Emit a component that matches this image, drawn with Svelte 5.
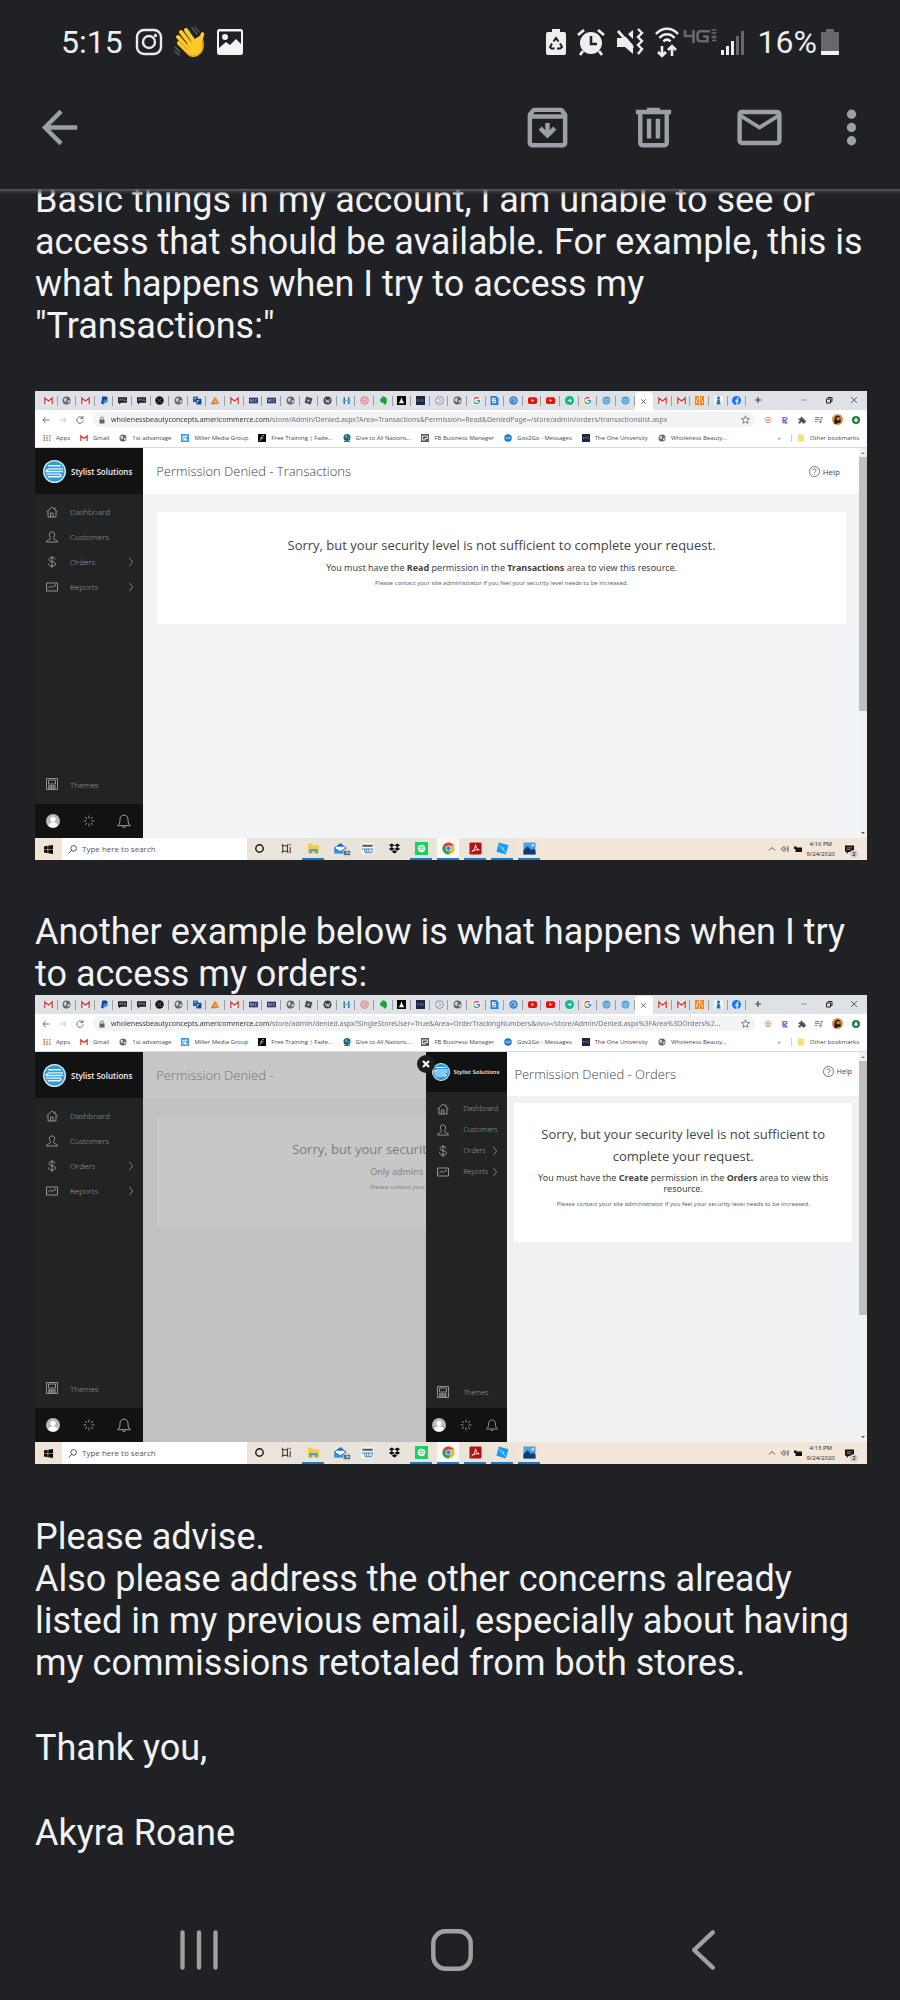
<script>
  const site = 'wholenessbeautyconcepts.americommerce.com';
  const urls = {
    transactions: site + '/store/Admin/Denied.aspx?Area=Transactions&Permission=Read&DeniedPage=/store/admin/orders/transactionslist.aspx',
    orders: site + '/store/admin/denied.aspx?SingleStoreUser=True&Area=OrderTrackingNumbers&ovu=/store/Admin/Denied.aspx%3FArea%3DOrders%2...'
  };
  const tabs = [
    'gmail', 'globe', 'gmail', 'paypal', 'prg', 'prg', 'coin', 'globe', 'people', 'ads', 'gmail', 'scc', 'scc',
    'globe', 'rhombus', 'wordpress', 'letterh', 'rings', 'elephant', 'lamp', 'title', 'ring', 'globe', 'google',
    'bluedoc', 'swirl', 'youtube', 'youtube', 'teal', 'google', 'sky', 'sky', 'active', 'gmail', 'gmail', 'carrots',
    'figure', 'facebook'
  ];
  const bookmarks = [
    ['apps', 'Apps'], ['gmail', 'Gmail'], ['globe', '1st advantage'], ['kblue', 'Miller Media Group'],
    ['script', 'Free Training | Fade...'], ['earth', 'Give to All Nations...'], ['fbm', 'FB Business Manager'],
    ['gov', 'Gov2Go - Messages'], ['title', 'The One University'], ['globe', 'Wholeness Beauty...']
  ];
  const menu = [['home', 'Dashboard', false], ['user', 'Customers', false], ['dollar', 'Orders', true], ['chart', 'Reports', true]];
  const apps = [
    ['cortana', false], ['taskview', false], ['folder', true], ['mail', false], ['shop', false], ['dropbox', false],
    ['spot', true], ['chrome', true], ['acrobat', true], ['tile', true], ['photos', true]
  ];
</script>

{#snippet fav(kind)}
  <svg class="fav" viewBox="0 0 16 16" aria-hidden="true">
    {#if kind === 'gmail'}
      <path d="M1 3h14v11H1z" fill="#f6f0f0" />
      <path d="M1.500 14V3.500L8 9l6.500-5.500V14" fill="none" stroke="#d6453d" stroke-width="2.400" />
    {:else if kind === 'globe'}
      <circle cx="8" cy="8" r="7" fill="#5f6368" />
      <path d="M3 5l4-2 2 2-2 2 1 2-2 2-3-3zM10 8l4-1-1 4-3 2z" fill="#d7dadd" />
    {:else if kind === 'paypal'}
      <path d="M4 1h6c3 0 4 2 3 5s-3 4-5 4H7l-1 4H2z" fill="#1d3f8f" />
      <path d="M7 6h7c0 4-2 6-5 6H8l-.5 3H5z" fill="#2596d8" />
    {:else if kind === 'prg'}
      <path d="M0 2h16v10H5l-3 3v-3H0z" fill="#1b1c1f" />
      <path d="M3 9V5h2v2H3m4 2V5h2v2l1 2m4-4h-2v4h2V7" fill="none" stroke="#aaa" stroke-width="1" />
    {:else if kind === 'coin'}
      <circle cx="8" cy="8" r="7.500" fill="#161512" />
      <path d="M4 4l8 8M12 4l-8 8" stroke="#7e7024" stroke-width="1.600" />
    {:else if kind === 'people'}
      <path d="M0 1h9v10H0z" fill="#1767b4" />
      <path d="M6 5h9v10H6z" fill="#0d4a8c" />
      <path d="M2 4h4M8 12V8h3" stroke="#cfe2f4" stroke-width="1.500" fill="none" />
    {:else if kind === 'ads'}
      <path d="M5 2h4l6 12H9z" fill="#f39a2c" /><path d="M7 5L2 13h8" fill="none" stroke="#e9761f" stroke-width="3" />
    {:else if kind === 'scc'}
      <path d="M0 3h16v10H0z" fill="#27306f" />
      <path d="M5 6H2v2h3v2H2m7-4H7v4h2m5-4h-3v4h3" fill="none" stroke="#c9cce6" />
    {:else if kind === 'rhombus'}
      <path d="M4 1l11 3-3 11-11-3z" fill="#4d5156" /><path d="M7 6l3 1-1 3-3-1z" fill="#d5d7da" />
    {:else if kind === 'wordpress'}
      <circle cx="8" cy="8" r="7" fill="#3c3f42" />
      <path d="M4 5l2.500 7L8 7l2 5 2-7" fill="none" stroke="#e4e6e9" stroke-width="1.500" />
    {:else if kind === 'letterh'}
      <path d="M4 2v12M12 2v12" stroke="#2c7096" stroke-width="2.500" /><path d="M1 8h14" stroke="#64b0d0" stroke-width="2" />
    {:else if kind === 'rings'}
      <g fill="none" stroke="#e46c72" stroke-width="1.500"><circle cx="8" cy="8" r="7" /><circle cx="8" cy="8" r="4" /><path d="M6 8h4" /></g>
    {:else if kind === 'elephant'}
      <path d="M5 1c5-1 9 1 9 6 0 6-1 8-4 8-2 0-3-2-1-3H7c-3 0-6-2-5-7l3-1z" fill="#16a637" />
    {:else if kind === 'lamp'}
      <path d="M0 0h16v16H0z" fill="#080808" /><path d="M8 2l2 6 3 5H3l3-5z" fill="#f4f4f4" />
    {:else if kind === 'title'}
      <path d="M0 0h16v16H0z" fill="#1b2742" /><path d="M3 6v4m0-3h2m2-1v4m3-5v5m2-3h2m-2 3h2" stroke="#8d9bb8" fill="none" />
    {:else if kind === 'ring'}
      <circle cx="8" cy="8" r="7" fill="#e9ebf2" stroke="#7a809a" stroke-width="1.500" /><path d="M5 4l6 4-6 4" fill="none" stroke="#5b6287" />
    {:else if kind === 'google'}
      <circle cx="8" cy="8" r="8" fill="#fff" />
      <g fill="none" stroke-width="2.400"><path d="M12 4a5.500 5.500 0 0 0-8.500 1.500" stroke="#ea4335" /><path d="M3.500 5.500a5.500 5.500 0 0 0 0 5" stroke="#fbbc05" /><path d="M3.500 10.500a5.500 5.500 0 0 0 8 2" stroke="#34a853" /><path d="M11.500 12.500A5 5 0 0 0 13.500 8H8" stroke="#4285f4" /></g>
    {:else if kind === 'bluedoc'}
      <path d="M1 0h10l4 4v12H1z" fill="#1b86e0" /><path d="M5 4v8h5V8H5V4h4v4" fill="none" stroke="#fff" stroke-width="1.700" />
    {:else if kind === 'swirl'}
      <circle cx="8" cy="8" r="7.500" fill="#3a83c4" /><path d="M4 10a4 4 0 1 1 6 1M8 5a3 3 0 1 1-2 5" fill="none" stroke="#c5e2f4" stroke-width="1.300" />
    {:else if kind === 'youtube'}
      <rect x="0" y="2" width="16" height="12" rx="3" fill="#e8120c" /><path d="M6.500 5.500v5l4-2.500z" fill="#fff" />
    {:else if kind === 'teal'}
      <circle cx="8" cy="8" r="8" fill="#10b98a" /><path d="M5 8h6M8 5l3 3-3 3" stroke="#d6fff2" stroke-width="1.800" fill="none" />
    {:else if kind === 'sky'}
      <circle cx="8" cy="8" r="7" fill="#4ca3d6" /><path d="M3 6h10M2 9h12M5 12h6" stroke="#a9d6ee" stroke-width="1.200" />
    {:else if kind === 'active'}
      <path d="M3 3l10 10M13 3L3 13" stroke="#45484c" stroke-width="1.800" />
    {:else if kind === 'carrots'}
      <path d="M0 0h16v16H0z" fill="#f58220" /><path d="M5 2v3L3 9v4M11 2v3l2 4v4M8 0v16" stroke="#fff3e4" stroke-width="1.600" fill="none" />
    {:else if kind === 'figure'}
      <path d="M0 0h16v16H0z" fill="#eef6fa" /><circle cx="8" cy="3.500" r="2.500" fill="#24688c" /><path d="M6 6h4l2 9H4z" fill="#2d7ca4" />
    {:else if kind === 'facebook'}
      <circle cx="8" cy="8" r="8" fill="#1877f2" /><path d="M9 16V9h2.500M5.500 9H9V6c0-2 1-2.500 3-2.500" fill="none" stroke="#fff" stroke-width="2" />
    {:else if kind === 'apps'}
      <g><path d="M1 2h3v3H1zM1 11h3v3H1z" fill="#e65c50" /><path d="M6.500 2h3v3h-3zM12 6.500h3v3h-3z" fill="#e9a13b" /><path d="M12 2h3v3h-3zM1 6.500h3v3H1z" fill="#d76a3c" /><path d="M6.500 6.500h3v3h-3z" fill="#4a90d9" /><path d="M6.500 11h3v3h-3zM12 11h3v3h-3z" fill="#4fae63" /></g>
    {:else if kind === 'kblue'}
      <path d="M0 0h16v16H0z" fill="#3b9be8" /><path d="M3 3h10v2L8 8l5 3v2H3z" fill="#e6f4ff" /><path d="M3 3h5v4H5v6" fill="none" stroke="#3b9be8" />
    {:else if kind === 'script'}
      <path d="M0 0h16v16H0z" fill="#090909" /><path d="M12 3c-5 0-5 3-6 7-.5 2-1 3-3 3M5 8h6" fill="none" stroke="#ddd" stroke-width="1.500" />
    {:else if kind === 'earth'}
      <circle cx="8" cy="7" r="7" fill="#1f5c93" /><path d="M4 3l4-1 1 4-3 3zM10 6l3 1-2 4z" fill="#5dc06a" /><path d="M2 15h12" stroke="#41779c" stroke-width="2" />
    {:else if kind === 'fbm'}
      <path d="M0 0h16v16H0z" fill="#5b6168" /><path d="M3 4h10v5H8v3H3z" fill="none" stroke="#fff" stroke-width="1.600" />
    {:else if kind === 'gov'}
      <circle cx="8" cy="8" r="7.500" fill="#1976c9" /><path d="M7 6H4v4h3V8M9 6h3v4H9z" fill="none" stroke="#d8ecff" />
    {/if}
  </svg>
{/snippet}

{#snippet glyph(kind)}
  <svg class="glyph {kind}" viewBox="0 0 24 24" fill="none" stroke="currentColor" stroke-width="1.700" aria-hidden="true">
    {#if kind === 'home'}<path d="M1 12L12 2l11 10M4 10v12h16V10M9 22v-8h5v8M18 7V3" />
    {:else if kind === 'user'}<path d="M12 2c4 0 6 2 5 7-.4 3-2 4-2 6 0 3 8 2 8 7H1c0-5 8-4 8-7 0-2-1.600-3-2-6-1-5 1-7 5-7z" />
    {:else if kind === 'dollar'}<path d="M18 7c0-3-3-4-6-4-4 0-6 2-6 4 0 6 13 3 13 9 0 3-3 4-7 4s-7-1-7-5M12 0v24" />
    {:else if kind === 'chart'}<path d="M1 4h22v16H1zM4 15l5-5 4 3 6-6M18 10h2" />
    {:else if kind === 'themes'}<path d="M1 1h22v22H1zM5 4h14v8H5zM4 16h16M4 20h16M6 14v8M11 14v8M16 14v8" />
    {:else if kind === 'chevron'}<path d="M8 2l8 10-8 10" />
    {:else if kind === 'sun'}<path d="M12 1v6M12 17v6M1 12h6M17 12h6M4 4l4 4M16 16l4 4M20 4l-4 4M8 16l-4 4" />
    {:else if kind === 'bell'}<path d="M1 20c4-3 4-6 4-10 0-5 3-8 7-8s7 3 7 8c0 4 0 7 4 10zM9 21c1 3 5 3 6 0" />
    {/if}
  </svg>
{/snippet}

{#snippet logo()}
  <svg class="logo" viewBox="0 0 44 44" aria-hidden="true">
    <circle cx="22" cy="22" r="22" fill="#d9edf8" /><circle cx="22" cy="22" r="19.500" fill="#2f9bd8" />
    <path d="M10 11h24M38 17H14c-5 0-8 3-8 5h32M6 27h25c4 0 5 5 0 5H9" fill="none" stroke="#e9f6fd" stroke-width="2.600" />
  </svg>
{/snippet}

{#snippet sidebar(small)}
  <nav class="side" class:small aria-label="Store">
    <div class="brand">{@render logo()}<b>Stylist Solutions</b></div>
    <ul>
      {#each menu as [icon, label, more]}
        <li><a href="#{label}">{@render glyph(icon)}<span>{label}</span>{#if more}{@render glyph('chevron')}{/if}</a></li>
      {/each}
    </ul>
    <a class="themes" href="#Themes">{@render glyph('themes')}<span>Themes</span></a>
    <div class="foot">
      <svg class="avatar" viewBox="0 0 24 24" aria-hidden="true"><circle cx="12" cy="12" r="12" fill="#b9b9b9" /><circle cx="12" cy="9" r="4.500" fill="#fff" /><path d="M4 20c0-8 16-8 16 0-4 4-12 4-16 0z" fill="#fff" /></svg>
      {@render glyph('sun')}{@render glyph('bell')}
    </div>
  </nav>
{/snippet}

{#snippet help()}
  <a class="help" href="#help"><svg viewBox="0 0 24 24" fill="none" stroke="currentColor" stroke-width="1.600" aria-hidden="true"><circle cx="12" cy="12" r="11" /><path d="M8.500 9c0-4 7-4 7 0 0 2.500-3.500 2.500-3.500 6M12 17v2" /></svg>Help</a>
{/snippet}

{#snippet browserTop(url)}
  <div class="tabs">
    <div class="tablist">
      {#each tabs as tab}<div class="tab" class:active={tab === 'active'}>{@render fav(tab)}</div>{/each}
    </div>
    <svg class="plus" viewBox="0 0 10 10" aria-hidden="true"><path d="M5 2v6M2 5h6" stroke="#3c4043" stroke-width="1.200" /></svg>
    <div class="window">
      <svg viewBox="0 0 10 10" aria-hidden="true"><path d="M2.500 5h5" stroke="#8b8e92" /></svg>
      <svg viewBox="0 0 10 10" fill="none" stroke="#222" aria-hidden="true"><path d="M2.500 4h4v4h-4zM4 3.500v-1h4v4H7" /></svg>
      <svg viewBox="0 0 10 10" aria-hidden="true"><path d="M2 2l6 6M8 2L2 8" stroke="#3c4043" stroke-width=".8" /></svg>
    </div>
  </div>
  <div class="address">
    <svg class="ctl" viewBox="0 0 16 16" fill="none" stroke="#5f6368" stroke-width="1.800" aria-hidden="true"><path d="M15 8H2M7 2L2 8l5 6" /></svg>
    <svg class="ctl" viewBox="0 0 16 16" fill="none" stroke="#bfc1c4" stroke-width="1.800" aria-hidden="true"><path d="M1 8h13M9 2l5 6-5 6" /></svg>
    <svg class="ctl" viewBox="0 0 16 16" fill="none" stroke="#5f6368" stroke-width="1.800" aria-hidden="true"><path d="M13 4a6.500 6.500 0 1 0 1.500 5M14 0v5H9" /></svg>
    <div class="omnibox">
      <svg viewBox="0 0 12 16" aria-hidden="true"><path d="M1 7h10v8H1z" fill="#5f6368" /><path d="M3 7V5a3 3 0 0 1 6 0v2" fill="none" stroke="#5f6368" stroke-width="1.600" /></svg>
      <input type="text" aria-label="Address" value={url} />
      <svg class="star" viewBox="0 0 16 16" fill="none" stroke="#5f6368" stroke-width="1.400" aria-hidden="true"><path d="M8 1.500l2 4.500 5 .5-3.700 3.300 1 5L8 12.300 3.700 14.800l1-5L1 6.500 6 6z" /></svg>
    </div>
    <div class="exts">
      <svg viewBox="0 0 16 16" fill="none" stroke="#ee8a6a" stroke-width="1.800" aria-hidden="true"><path d="M1 7c2-6 12-6 14 0M2 10h12M4 13h8M4 7h8" /></svg>
      <svg viewBox="0 0 16 16" fill="none" stroke="#8a4fc0" stroke-width="2.400" aria-hidden="true"><path d="M4 14V3h5c4 0 4 5 0 5H5l7 6M4 14h9" /></svg>
      <svg viewBox="0 0 16 16" fill="#4c5054" aria-hidden="true"><path d="M1 5h4c-1-5 5-5 4 0h4v4c4-1 4 5 0 4v2H9c0-4-4-4-4 0H1v-4c4 0 4-3 0-3z" /></svg>
      <svg viewBox="0 0 16 16" fill="none" stroke="#5f6368" stroke-width="1.600" aria-hidden="true"><path d="M0 3h9M0 7h9M0 11h5M12 12V3h4" /><circle cx="10.500" cy="12" r="1.500" /></svg>
      <svg class="big" viewBox="0 0 16 16" aria-hidden="true"><circle cx="8" cy="8" r="8" fill="#d79a3c" /><path d="M4 15c-2-9 1-13 5-13 4 1 3 6 4 10z" fill="#2a1712" /><circle cx="9" cy="7" r="2.600" fill="#c98562" /></svg>
      <svg viewBox="0 0 16 16" aria-hidden="true"><circle cx="8" cy="8" r="8" fill="#17803c" /><circle cx="8" cy="8.500" r="3.300" fill="#fff" /><path d="M8 3v5" stroke="#fff" stroke-width="1.500" /></svg>
    </div>
  </div>
  <div class="bookmarks">
    {#each bookmarks as [icon, label]}<a href="#{icon}">{@render fav(icon)}{label}</a>{/each}
    <span class="more">»</span>
    <a class="other" href="#other"><svg class="fav" viewBox="0 0 16 16" aria-hidden="true"><path d="M2 1h10l2 3v11H2z" fill="#fadc78" /></svg>Other bookmarks</a>
  </div>
{/snippet}

{#snippet scroller()}
  <div class="scroller"><i class="up"></i><div class="thumb"></div><i class="down"></i></div>
{/snippet}

{#snippet taskbar(time, id)}
  <div class="taskbar">
    <svg class="start" viewBox="0 0 16 16" aria-hidden="true"><path d="M0 2.500l6.500-1v6H0zM7.500 1.300L16 0v7.500H7.500zM0 8.500h6.500v6L0 13.500zM7.500 8.500H16V16l-8.500-1.300z" fill="#0a0a0a" /></svg>
    <label class="search" for={id}>
      <svg viewBox="0 0 16 16" fill="none" stroke="#333" stroke-width="1.500" aria-hidden="true"><circle cx="10" cy="6" r="5" /><path d="M6.500 9.500L1 15" /></svg>
      <input {id} type="text" placeholder="Type here to search" aria-label="Search" />
    </label>
    <div class="apps">
      {#each apps as [app, open]}
        <span class="app" class:open class:current={app === 'chrome'}>
          <svg viewBox="0 0 28 28" aria-hidden="true">
            {#if app === 'cortana'}<circle cx="14" cy="14" r="8" fill="none" stroke="#111" stroke-width="3" />
            {:else if app === 'taskview'}<path d="M5 4v4h12V4M5 24v-4h12v4M6 8v12M16 8v12M22 4v3M22 11v13" fill="none" stroke="#222" stroke-width="2" />
            {:else if app === 'folder'}<path d="M2 4h9l2 3h13v17H2z" fill="#f3cc4e" /><path d="M5 25V15h18v10h-5v-5h-8v5z" fill="#4aa0dc" />
            {:else if app === 'mail'}<path d="M1 12L14 2l12 10v12H1z" fill="#1b6fc0" /><path d="M4 10h19v4l-9 6-10-6z" fill="#fff" /><path d="M1 13l12 7 13-7v12H1z" fill="#2f95dd" />
            {:else if app === 'shop'}<path d="M1 2h26v24H1z" fill="#f5f5f2" /><path d="M3 7h22M3 9h22" stroke="#333" stroke-width="2" /><path d="M2 15h5l2 8h14l2-8H8M12 15v8M17 15v8" fill="none" stroke="#3585c4" stroke-width="2" />
            {:else if app === 'dropbox'}<path d="M8 3l6 4-6 4-6-4zM20 3l6 4-6 4-6-4zM8 11l6 4-6 4-6-4zM20 11l6 4-6 4-6-4zM14 17l6 4-6 4-6-4z" fill="#0b0b0b" />
            {:else if app === 'spot'}<path d="M0 0h28v28H0z" fill="#1fcf63" /><circle cx="14" cy="14" r="8" fill="#e8f8ec" /><path d="M9 12c4-2 7-1 10 1M10 16c3-1 5-1 7 1" stroke="#1fcf63" stroke-width="2" fill="none" />
            {:else if app === 'chrome'}<circle cx="14" cy="14" r="13" fill="#e8b92e" /><path d="M14 14L2.700 7.500A13 13 0 0 1 25.300 7.500H14z" fill="#da4437" /><path d="M2.700 7.500A13 13 0 0 0 14 27l5-10-5-3z" fill="#2fa052" /><circle cx="14" cy="14" r="6" fill="#fff" /><circle cx="14" cy="14" r="4.600" fill="#3d7fe0" />
            {:else if app === 'acrobat'}<rect x="1" y="1" width="26" height="26" rx="3" fill="#b1120d" /><path d="M6 21c4-2 8-8 8-15 1 7 4 10 8 11-6-1-11 0-16 4z" fill="none" stroke="#fff" stroke-width="2" />
            {:else if app === 'tile'}<path d="M6 1l21 6-6 20L1 21z" fill="#189af0" /><path d="M6 6l15 17M15 11l2 6" stroke="#dff1ff" stroke-width="1.500" />
            {:else if app === 'photos'}<path d="M1 1h26v26H1z" fill="#4aa3e6" /><path d="M1 17l9-8 8 9 4-4 5 5v8H1z" fill="#123a72" /><circle cx="21" cy="7" r="2.500" fill="#e5f4ff" />
            {/if}
          </svg>
          {#if app === 'mail'}<em class="badge">82</em>{/if}
        </span>
      {/each}
    </div>
    <div class="tray">
      <svg viewBox="0 0 16 16" fill="none" stroke="#333" stroke-width="1.600" aria-hidden="true"><path d="M2 11l6-6 6 6" /></svg>
      <svg viewBox="0 0 18 16" fill="none" stroke="#333" stroke-width="1.400" aria-hidden="true"><path d="M1 6h2l4-4v12l-4-4H1zM10 5v6M13 3c2 3 2 7 0 10M15.500 1.500c3 4 3 9 0 13" /></svg>
      <svg viewBox="0 0 16 16" aria-hidden="true"><path d="M0 3h5v2h11v9H3V8H0z" fill="#111" /></svg>
      <div class="clock"><span>{time}</span><span>9/24/2020</span></div>
      <div class="note"><svg viewBox="0 0 16 16" aria-hidden="true"><path d="M0 1h16v11H7l-4 4v-4H0z" fill="#111" /><path d="M3 5h10M3 8h7" stroke="#ddd" /></svg><em class="badge">2</em></div>
    </div>
  </div>
{/snippet}

<div class="phone">
  <header>
    <div class="status">
      <span class="time">5:15</span>
      <svg width="28" height="28" viewBox="0 0 28 28" fill="none" stroke="#e8eaed" stroke-width="2.400" aria-hidden="true"><rect x="2" y="2" width="24" height="24" rx="7" /><circle cx="14" cy="14" r="6" /><circle cx="20.500" cy="7.500" r="1.700" fill="#e8eaed" stroke="none" /></svg>
      <svg class="wave" width="32" height="32" viewBox="0 0 32 32" fill="none" stroke-linecap="round" aria-hidden="true">
        <path d="M13 18L27 9c1 7 4 12-1 18-5 5-11 3-14-1z" fill="#ffca28" />
        <path d="M12 4l9 13M7 6l11 14M4 11l11 12M5 17l10 10" stroke="#ffca28" stroke-width="4" />
        <path d="M28.500 8c-1 4-1 6-3 8" stroke="#ffca28" stroke-width="3.500" />
        <path d="M9.500 6l8 11M6 10l9 11M5.500 15l8 9" stroke="#c98a12" stroke-width=".8" />
        <path d="M13 27c4 5 10 4 14-1 3-4 2-8 2-11" stroke="#f0a81c" stroke-width="1.500" />
        <path d="M18 2l5 6M21 1l4 5M1 21l5 5M1 25l4 4" stroke="#5c6167" stroke-width="1.200" />
      </svg>
      <svg width="26" height="26" viewBox="0 0 26 26" aria-hidden="true"><rect width="26" height="26" rx="2.500" fill="#f1f3f4" /><path d="M2 2.500h22V15l-5-5-6 6-4-3-7 6z" fill="#202124" /><circle cx="8" cy="8" r="3" fill="#f1f3f4" /></svg>
      <span class="fill"></span>
      <svg width="20" height="28" viewBox="0 0 20 28" aria-hidden="true"><path d="M6 1h8v3h4a2 2 0 0 1 2 2v19a2 2 0 0 1-2 2H2a2 2 0 0 1-2-2V6a2 2 0 0 1 2-2h4z" fill="#eceeef" /><path d="M7.500 13.500L10 10l2.500 3.500M14 15.500l2 3.500-2 1.500h-3M8.500 20.500H5.500L4 19l2-3.500" fill="none" stroke="#202124" stroke-width="2" /></svg>
      <svg width="28" height="28" viewBox="0 0 28 28" aria-hidden="true"><circle cx="14" cy="15" r="11" fill="#eceeef" /><path d="M14 8v8h6" fill="none" stroke="#202124" stroke-width="2.500" /><path d="M1 7l6-5M27 7l-6-5M6 23l-3 4M22 23l3 4" stroke="#eceeef" stroke-width="2.800" /></svg>
      <svg width="28" height="28" viewBox="0 0 28 28" fill="#eceeef" aria-hidden="true"><path d="M1 10h5l4-1 7 8v9l-8-7H1zM12 6l5-4v9zM3 2l15 17-2 2L1 4z" /><path d="M22 1l4 4-4 4 4 4-4 4 4 4-4 5" fill="none" stroke="#eceeef" stroke-width="2.400" /></svg>
      <svg width="24" height="32" viewBox="0 0 24 32" fill="none" stroke="#eceeef" stroke-width="2.600" aria-hidden="true"><path d="M1 8c6-7 16-7 22 0M4.500 12c4-5 11-5 15 0M8.500 15.500c2-2.500 5-2.500 7 0M7 20v9M3 26l4 4 4-4M17 30v-9M13 24l4-4 4 4" /></svg>
      <svg class="lte" width="34" height="28" viewBox="0 0 34 28" fill="none" stroke="#66686b" stroke-width="2.600" aria-hidden="true"><path d="M2 2v6h10M10.500 2v13M27 3.300H17.500c-2 0-3 1-3 3v4c0 2 1 3 3 3h7V8.500H20" /><path d="M28.500 2h5M28.500 5h5M28.500 9h5M29 12.500h4.500M31 7v4" stroke-width="1.300" /></svg>
      <svg width="24" height="28" viewBox="0 0 24 28" aria-hidden="true"><path d="M0 22h3v5H0zM5 18h3v9H5zM10 13h3v14h-3z" fill="#eceeef" /><path d="M15 8h3v19h-3zM20 3h3v24h-3z" fill="#66686b" /></svg>
      <span class="pct">16%</span>
      <svg width="18" height="28" viewBox="0 0 18 28" aria-hidden="true"><path d="M5 1h8v3h5v23H0V4h5z" fill="#66686b" /><path d="M0 23h18v3a1 1 0 0 1-1 1H1a1 1 0 0 1-1-1z" fill="#f1f3f4" /></svg>
    </div>
    <div class="toolbar">
      <button aria-label="Back"><svg viewBox="0 0 24 24"><path d="M20 11H7.800l5.600-5.600L12 4l-8 8 8 8 1.400-1.400L7.800 13H20z" /></svg></button>
      <span class="fill"></span>
      <button aria-label="Archive"><svg viewBox="0 0 24 24"><path d="M20.500 5.200L19.200 3.500C18.900 3.200 18.500 3 18 3H6c-.5 0-.9.200-1.200.600L3.500 5.200C3.200 5.600 3 6 3 6.500V19c0 1.100.9 2 2 2h14c1.100 0 2-.9 2-2V6.500c0-.5-.2-.9-.5-1.300zM6.200 5h11.600l.8 1H5.400zM5 19V8h14v11zM11 10v3.200l-1.600-1.600L8 13l4 4 4-4-1.400-1.400-1.600 1.600V10z" /></svg></button>
      <button aria-label="Delete"><svg viewBox="0 0 24 24"><path d="M15 4V3H9v1H4v2h1v13c0 1.100.9 2 2 2h10c1.100 0 2-.9 2-2V6h1V4zm2 15H7V6h10zM9 8h2v9H9zM13 8h2v9h-2z" /></svg></button>
      <button aria-label="Mark unread"><svg viewBox="0 0 24 24"><path d="M20 4H4c-1.100 0-2 .9-2 2v12c0 1.100.9 2 2 2h16c1.100 0 2-.9 2-2V6c0-1.100-.9-2-2-2zm0 14H4V8l8 5 8-5zm-8-7L4 6h16z" /></svg></button>
      <button class="dots" aria-label="More options"><svg viewBox="0 0 24 24"><circle cx="12" cy="6" r="2.100" /><circle cx="12" cy="12" r="2.100" /><circle cx="12" cy="18" r="2.100" /></svg></button>
    </div>
  </header>

  <main>
    <p class="first">Basic things in my account, I am unable to see or access that should be available. For example, this is what happens when I try to access my "Transactions:"</p>

    <figure class="shot one">
      {@render browserTop(urls.transactions)}
      <div class="stage">
        {@render sidebar(false)}
        <section class="page">
          <div class="pagehead"><h2>Permission Denied - Transactions</h2>{@render help()}</div>
          <div class="card">
            <h3>Sorry, but your security level is not sufficient to complete your request.</h3>
            <p>You must have the <b>Read</b> permission in the <b>Transactions</b> area to view this resource.</p>
            <small>Please contact your site administrator if you feel your security level needs to be increased.</small>
          </div>
        </section>
        {@render scroller()}
      </div>
      {@render taskbar('4:16 PM', 'search-a')}
    </figure>

    <p>Another example below is what happens when I try to access my orders:</p>

    <figure class="shot two">
      {@render browserTop(urls.orders)}
      <div class="stage">
        {@render sidebar(false)}
        <section class="page dim">
          <div class="pagehead"><h2>Permission Denied -</h2></div>
          <div class="card">
            <h3>Sorry, but your security</h3>
            <p>Only admins</p>
            <small>Please contact your</small>
          </div>
        </section>
        <div class="popup">
          <button class="close" aria-label="Close"><svg viewBox="0 0 18 18"><circle cx="9" cy="9" r="9" fill="#1c1d1d" /><path d="M6 6l6 6M12 6l-6 6" stroke="#fff" stroke-width="2.200" /></svg></button>
          {@render sidebar(true)}
          <section class="page">
            <div class="pagehead"><h2>Permission Denied - Orders</h2>{@render help()}</div>
            <div class="card">
              <h3>Sorry, but your security level is not sufficient to complete your request.</h3>
              <p>You must have the <b>Create</b> permission in the <b>Orders</b> area to view this resource.</p>
              <small>Please contact your site administrator if you feel your security level needs to be increased.</small>
            </div>
          </section>
        </div>
        {@render scroller()}
      </div>
      {@render taskbar('4:13 PM', 'search-b')}
    </figure>

    <p>Please advise.<br />Also please address the other concerns already listed in my previous email, especially about having my commissions retotaled from both stores.</p>
    <p class="para">Thank you,</p>
    <p class="para">Akyra Roane</p>
  </main>

  <footer>
    <button aria-label="Recent apps"><svg viewBox="0 0 40 40"><path d="M5 4v32M20 4v32M35 4v32" /></svg></button>
    <button aria-label="Home"><svg viewBox="0 0 40 40"><rect x="3" y="3" width="34" height="34" rx="11" /></svg></button>
    <button aria-label="Back"><svg viewBox="0 0 40 40"><path d="M28 4L11 20l17 16" /></svg></button>
  </footer>
</div>

<style>
  :global(body) { margin: 0; background: #202124; }
  .phone { min-height: 2000px; display: flex; flex-direction: column; background: #202124; color: #f1f3f4; font-family: Roboto, sans-serif; overflow: hidden; }
  button { border: 0; padding: 0; background: none; display: grid; place-items: center; }
  a { color: inherit; text-decoration: none; }
  svg { display: block; flex: none; }
  .fill { flex: 1; }

  header { position: relative; z-index: 1; height: 189px; background: #202124; }
  header::after { content: ''; position: absolute; left: 0; right: 0; top: 189px; height: 6px; background: linear-gradient(#5c5d60, rgba(60, 61, 64, 0.6) 50%, transparent); }
  .status { display: flex; align-items: center; gap: 11px; height: 84px; padding: 0 61px; }
  .time, .pct { font-size: 32px; line-height: 40px; color: #eceeef; }
  .time { margin-right: 1px; }
  .status .lte { margin-left: -7px; }
  .status .lte + svg { margin-left: -7px; }
  .pct { margin: 0 -7px 0 2px; }
  .toolbar { display: flex; align-items: center; height: 86px; padding: 0 22px 0 33px; }
  .toolbar button { width: 53px; height: 53px; margin-left: 53px; }
  .toolbar button:first-child { margin-left: 0; }
  .toolbar .dots { margin-left: 39px; }
  .toolbar svg { width: 53px; height: 53px; fill: #9aa0a6; }

  main { flex: 1; padding: 0 33px 0 35px; overflow: hidden; }
  main > p { margin: 0; font-size: 36px; line-height: 42px; }
  main > p.first { margin-top: -10px; }
  main > p.para { margin-top: 43px; }

  .shot { margin: 0; background: #fff; color: #444; font-family: 'Open Sans', 'Noto Sans', sans-serif; display: flex; flex-direction: column; overflow: hidden; }
  .one { margin: 44px 0 51px; }
  .two { margin: 0 0 52px; }
  .fav { width: 9px; height: 9px; }
  .tabs { display: flex; height: 19px; background: #dee1e6; padding-left: 4px; }
  .tablist { flex: 1; display: flex; }
  .tab { flex: 1; display: grid; place-items: center; position: relative; }
  .tab::after { content: ''; position: absolute; right: 0; top: 5px; height: 10px; border-right: 1px solid #9b9fa4; }
  .tab.active { background: #fff; border-radius: 4px 4px 0 0; margin-top: 1px; }
  .tab.active .fav { width: 7px; height: 7px; }
  .tab.active::after { display: none; }
  .plus { width: 10px; height: 10px; margin: 4px 0 0 7px; }
  .window { display: flex; gap: 15px; padding: 4px 8px 0 36px; }
  .window svg { width: 10px; height: 10px; }
  .address { display: flex; align-items: center; height: 19px; padding: 0 7px; gap: 9px; }
  .ctl { width: 8px; height: 8px; }
  .omnibox { flex: 1; display: flex; align-items: center; gap: 6px; height: 15px; border-radius: 8px; background: #f1f3f4; padding: 0 5px 0 6px; }
  .omnibox svg { width: 6px; height: 8px; }
  .omnibox .star { width: 9px; height: 9px; }
  .omnibox input { flex: 1; min-width: 0; border: 0; padding: 0; height: 14px; font: 7px/14px 'Noto Sans', sans-serif; color: transparent; background: linear-gradient(90deg, #33363a 160px, #6b6f74 160px) text; }
  .exts { display: flex; align-items: center; gap: 9px; }
  .exts svg { width: 8px; height: 8px; }
  .exts .big { width: 11px; height: 11px; }
  .bookmarks { display: flex; align-items: center; gap: 10px; height: 18px; padding: 0 8px; border-bottom: 1px solid #d9dbde; font-size: 6px; white-space: nowrap; color: #45484c; }
  .bookmarks a { display: flex; align-items: center; gap: 5px; }
  .bookmarks .fav { width: 8px; height: 8px; }
  .more { margin-left: auto; }
  .bookmarks .other { border-left: 1px solid #c9ccd0; padding-left: 5px; }

  .stage { display: flex; min-height: 390px; background: #f2f3f5; }
  .side { flex: 0 0 13%; display: flex; flex-direction: column; background: #222423; color: #a3a5a4; }
  .brand { display: flex; align-items: center; gap: 5px; height: 46px; padding-left: 8px; background: #111212; color: #f2f2f2; font-size: 8px; white-space: nowrap; }
  .brand b { font-weight: 600; }
  .logo { width: 23px; height: 23px; }
  .side ul { list-style: none; margin: 0; padding: 5px 0 0; }
  .side a { display: flex; align-items: center; height: 25px; padding: 0 7px 0 11px; font-size: 8px; font-weight: 300; }
  .side a span { margin-left: 12px; }
  .glyph { width: 12px; height: 12px; }
  .side .chevron { width: 10px; height: 10px; margin-left: auto; }
  .side .themes { margin-top: auto; height: 40px; }
  .foot { display: flex; align-items: center; justify-content: space-between; height: 34px; padding: 0 12px 0 11px; background: #111212; }
  .avatar { width: 14px; height: 14px; }
  .foot .bell { width: 14px; height: 14px; }
  .small .brand { height: 40px; gap: 3px; padding-left: 6px; font-size: 6px; }
  .small .logo { width: 18px; height: 18px; }
  .small ul { padding-top: 6px; }
  .small a { height: 21px; padding: 0 7px 0 11px; font-size: 7px; }
  .small a span { margin-left: 14px; }
  .small .themes { height: 32px; }
  .small .foot { padding: 0 9px 0 6px; }
  .small .glyph.sun, .small .glyph.bell { width: 12px; height: 12px; }

  .page { flex: 1; min-width: 0; }
  .pagehead { display: flex; align-items: center; justify-content: space-between; height: 46px; padding: 0 19px 0 13px; background: #fff; }
  .pagehead h2 { margin: 0; font-size: 13px; font-weight: 300; line-height: 20px; color: #3f4143; white-space: nowrap; }
  .help { display: flex; align-items: center; gap: 3px; font-size: 8px; }
  .help svg { width: 11px; height: 11px; }
  .card { box-sizing: border-box; min-height: 112px; margin: 18px 13px 0 14px; padding: 22px 8px; background: #fff; text-align: center; color: #444; }
  .card h3 { margin: 0; font-size: 13px; line-height: 22px; font-weight: 400; }
  .card p { margin: 6px 0 0; font-family: 'Noto Sans', sans-serif; font-size: 9px; line-height: 11px; }
  .card small { display: block; margin-top: 6px; font-family: 'Noto Sans', sans-serif; font-size: 6px; line-height: 8px; color: #66686a; }
  .dim { background: #c1c1c1; overflow: hidden; white-space: nowrap; }
  .dim .pagehead { background: #c7c7c7; }
  .dim h2 { color: #727272; }
  .dim .card { margin-right: 0; padding: 22px 0; background: #c7c7c7; text-align: left; color: #7d7d7d; overflow: hidden; }
  .dim .card h3 { padding-left: 135px; }
  .dim .card p, .dim .card small { padding-left: 213px; color: #858585; }
  .popup { flex: 0 0 52%; display: flex; position: relative; }
  .popup .side { flex: 0 0 81px; min-width: 0; }
  .popup .page { background: #f0f1f2; }
  .popup .pagehead { height: 44px; padding: 0 7px; }
  .popup .help { margin-bottom: 6px; font-size: 7px; }
  .popup .card { min-height: 139px; margin: 7px 7px 0; padding: 20px 12px; }
  .popup .card p { margin-top: 5px; }
  .popup .card small { margin-top: 6px; }
  .close { position: absolute; left: -9px; top: 3px; width: 18px; height: 18px; }
  .close svg { width: 18px; height: 18px; }

  .scroller { flex: 0 0 8px; display: flex; flex-direction: column; align-items: center; background: #f1f1f1; }
  .thumb { width: 8px; height: 254px; background: #c0c0c0; }
  .up, .down { border: 2px solid transparent; }
  .up { margin: 2px 0 3px; border-bottom-color: #888; }
  .down { margin: auto 0 2px; border-top-color: #555; }

  .taskbar { display: flex; align-items: center; height: 22px; background: linear-gradient(90deg, #f0e4d5, #e8e4db 40%, #ebe4d8 55%, #f3e7d9 62%, #f3e7d9); }
  .start { width: 9px; height: 9px; margin: 0 9px; }
  .search { flex: 0 0 185px; display: flex; align-items: center; gap: 5px; height: 22px; padding-left: 6px; box-sizing: border-box; background: #fff; }
  .search svg { width: 9px; height: 9px; }
  .search input { flex: 1; min-width: 0; border: 0; padding: 0; font: 8px/14px 'Open Sans', sans-serif; background: none; }
  .search input::placeholder { color: #555; opacity: 1; }
  .apps { display: flex; height: 22px; gap: 5px; padding-left: 1px; }
  .app { position: relative; width: 22px; display: grid; place-items: center; box-sizing: border-box; border-bottom: 2px solid transparent; }
  .app svg { width: 13px; height: 13px; }
  .open { border-bottom-color: #1f78c1; }
  .current { background: #fbf8f3; }
  .badge { position: absolute; right: 0; bottom: 1px; min-width: 8px; border-radius: 5px; background: #cfd0cd; color: #222; font: 600 6px/8px 'Open Sans', sans-serif; text-align: center; }
  .tray { margin-left: auto; display: flex; align-items: center; gap: 5px; padding-right: 13px; }
  .tray svg { width: 8px; height: 8px; }
  .clock { display: flex; flex-direction: column; align-items: center; font-size: 6px; line-height: 10px; color: #222; }
  .note { position: relative; margin-left: 5px; }
  .tray .note svg { width: 9px; height: 9px; }
  .note .badge { right: -4px; bottom: -4px; }

  footer { display: flex; justify-content: space-between; align-items: center; height: 100px; padding: 0 174px 0 177px; box-sizing: border-box; }
  footer svg { width: 44px; height: 44px; fill: none; stroke: #a0a0a2; stroke-width: 4; stroke-linecap: round; stroke-linejoin: round; }
</style>
